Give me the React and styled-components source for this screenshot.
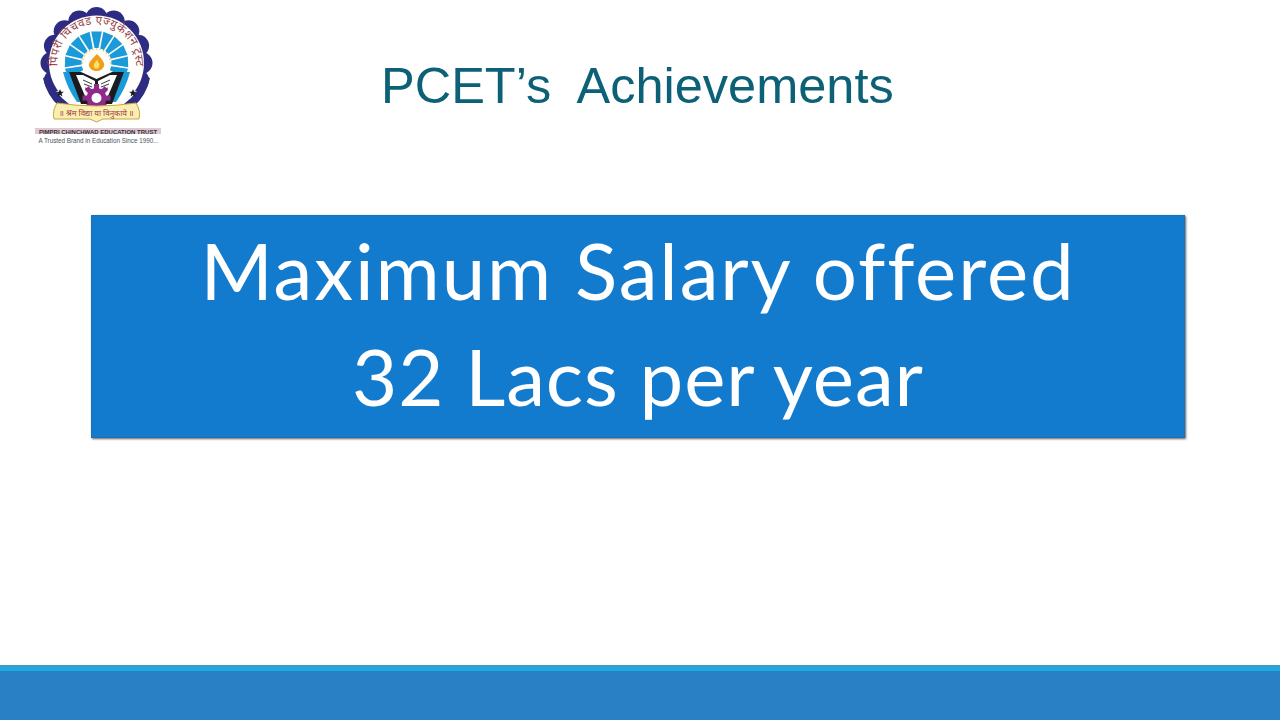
import React from "react";
import styled, { createGlobalStyle } from "styled-components";

const GlobalStyle = createGlobalStyle`
  html, body {
    margin: 0;
    padding: 0;
    background: #fff;
  }
`;

const CX = 63.5;
const CY = 63;
const rad = (a) => (a * Math.PI) / 180;
const polar = (r, a) => `${(CX + r * Math.sin(rad(a))).toFixed(1)} ${(CY - r * Math.cos(rad(a))).toFixed(1)}`;

// angle 0 is straight up
const wedge = (a, half, r1, r2) =>
  `M${polar(r1, a - half * 0.8)} L${polar(r2, a - half)} L${polar(r2, a + half)} L${polar(r1, a + half * 0.8)}Z`;

const scallops = Array.from({ length: 16 }, (_, i) => i * 22.5).filter((a) => a < 135 || a > 225);
const rays = [-110, -88, -66, -44, -22, 0, 22, 44, 66, 88, 110];
const sparks = Array.from({ length: 24 }, (_, i) => i * 15).filter((a) => a < 100 || a > 260);
const gearTeeth = [0, 45, 90, 135, 180, 225, 270, 315];

const Star = ({ x, y }) => (
  <path
    transform={`translate(${x} ${y})`}
    d="M0 -4 L1.1 -1.2 L3.9 -1.2 L1.7 .6 L2.4 3.4 L0 1.8 L-2.4 3.4 L-1.7 .6 L-3.9 -1.2 L-1.1 -1.2Z"
    fill="#1c1c20"
  />
);

const Logo = () => (
  <svg width="128" height="146" viewBox="0 0 128 146">
    {/* scalloped ring, open at the bottom */}
    {scallops.map((a) => (
      <circle
        key={a}
        cx={CX + 45 * Math.sin(rad(a))}
        cy={CY - 45 * Math.cos(rad(a))}
        r="11"
        fill="#2e2c82"
      />
    ))}
    <path d="M10 78 Q14 96 26 106 L36 104 Q20 92 16 76Z" fill="#2e2c82" />
    <path d="M117 78 Q113 96 101 106 L91 104 Q107 92 111 76Z" fill="#2e2c82" />
    <circle cx={CX} cy={CY} r="47.5" fill="#fefefc" />

    <path id="ringText" d="M25.5 72 A39 39 0 1 1 101.5 72" fill="none" />
    <text fontFamily="'Noto Sans', 'DejaVu Sans', sans-serif" fontSize="11.5" fill="#96404a">
      <textPath href="#ringText" startOffset="50%" textAnchor="middle" textLength="128">
        पिंपरी चिंचवड एज्युकेशन ट्रस्ट
      </textPath>
    </text>

    {/* blue sun rays */}
    {rays.map((a) => (
      <path key={a} d={wedge(a, 9.6, 15, 32)} fill="#1a9ad8" />
    ))}
    <path d="M30 72 L38 72 L50 102 L44 102 Q34 88 30 72Z" fill="#1a9ad8" />
    <path d="M97 72 L89 72 L77 102 L83 102 Q93 88 97 72Z" fill="#1a9ad8" />

    {/* lamp */}
    {sparks.map((a) => (
      <circle
        key={a}
        cx={CX + 14 * Math.sin(rad(a))}
        cy={CY - 14 * Math.cos(rad(a))}
        r="0.8"
        fill="#e6c45a"
      />
    ))}
    <path d="M64 54 C69 59 72 63 71 66 C70 69 67 71 63.5 71 C60 71 57 69 56 66 C55 63 59 59 64 54Z" fill="#ef9f1a" />
    <path d="M64 60 C66 63 67 65 66 67 C65 69 62 69 61 67 C60 65 62 62 64 60Z" fill="#fbe06a" />

    {/* open book */}
    <path d="M36 72 L48 72 L63.5 79 L79 72 L91 72 L79 104 L48 104Z" fill="#1b1b1e" />
    <path d="M43 75 L50 75 L62 81 L62 96 L52 96Z" fill="#fff" />
    <path d="M84 75 L77 75 L65 81 L65 96 L75 96Z" fill="#fff" />
    <path
      d="M50 80 L59 84 M51 84 L59 87 M52 88 L59 90 M77 80 L68 84 M76 84 L68 87 M75 88 L68 90"
      stroke="#3c3c44"
      strokeWidth="1"
    />

    {/* gear */}
    {gearTeeth.map((a) => (
      <rect
        key={a}
        x={CX - 2.5}
        y="84"
        width="5"
        height="5"
        fill="#8e2a8c"
        transform={`rotate(${a} ${CX} 98)`}
      />
    ))}
    <circle cx={CX} cy="98" r="7.5" fill="#fff" stroke="#8e2a8c" strokeWidth="5" />

    <Star x={27} y={93} />
    <Star x={100} y={93} />

    {/* motto scroll */}
    <path
      d="M24 103 Q63.5 109 103 103 Q108 111 106 119 L70 119 L63.5 122 L57 119 L21 119 Q19 111 24 103Z"
      fill="#fbeeb2"
      stroke="#c9a83f"
      strokeWidth="1"
    />
    <text
      x={CX}
      y="116"
      textAnchor="middle"
      fontFamily="'Noto Sans', 'DejaVu Sans', sans-serif"
      fontSize="8"
      fill="#9a3f3f"
    >
      ॥ श्रम विद्या या विनुकाये ॥
    </text>

    {/* trust name and tagline */}
    <rect x="2" y="128" width="126" height="6" fill="#dccbd3" />
    <text
      x="65"
      y="133.6"
      textAnchor="middle"
      fontFamily="'Liberation Sans', Arial, sans-serif"
      fontSize="6"
      fontWeight="700"
      fill="#3c2a3a"
    >
      PIMPRI CHINCHWAD EDUCATION TRUST
    </text>
    <text
      x="65.5"
      y="142.5"
      textAnchor="middle"
      fontFamily="'Liberation Sans', Arial, sans-serif"
      fontSize="6.3"
      fill="#4a5560"
    >
      A Trusted Brand in Education Since 1990...
    </text>
  </svg>
);

const App = () => {
  return (
    <>
      <GlobalStyle />
      <Slide>
        <Header>
          <LogoBox>
            <Logo />
          </LogoBox>
          <Title>PCET’s&nbsp; Achievements</Title>
        </Header>
        <Banner>
          <BannerLine $spacing={1.9}>Maximum Salary offered</BannerLine>
          <BannerLine $spacing={0.9}>32 Lacs per year</BannerLine>
        </Banner>
        <Footer />
      </Slide>
    </>
  );
};

const Slide = styled.div`
  width: 1280px;
  height: 720px;
  display: flex;
  flex-direction: column;
  overflow: hidden;
  background: #fff;
`;

const Header = styled.header`
  height: 215px;
  display: grid;
  grid-template-columns: 33px 128px 1fr;
  align-items: start;
  flex-shrink: 0;
`;

const LogoBox = styled.div`
  grid-column: 2;
  height: 146px;
`;

const Title = styled.h1`
  grid-column: 3;
  margin: 54px 0 0 220px;
  font-family: "Liberation Sans", Arial, sans-serif;
  font-weight: 400;
  font-size: 50.5px;
  line-height: 64px;
  color: #0d6176;
  white-space: nowrap;
`;

const Banner = styled.section`
  width: 1094px;
  height: 223px;
  margin-left: 91px;
  flex-shrink: 0;
  box-sizing: border-box;
  padding-top: 2px;
  display: flex;
  flex-direction: column;
  align-items: center;
  background: #137bce;
  box-shadow: inset 0 0 0 1px rgba(50, 90, 120, 0.3), 1px 1px 2px rgba(60, 60, 60, 0.8);
`;

const BannerLine = styled.div`
  height: 106px;
  font-family: "Lato", "Open Sans", sans-serif;
  font-size: 78px;
  line-height: 106px;
  letter-spacing: ${(p) => p.$spacing}px;
  color: #fff;
  white-space: nowrap;
`;

const Footer = styled.footer`
  margin-top: auto;
  height: 53px;
  flex-shrink: 0;
  box-sizing: border-box;
  background: #2a80c5;
  border-top: 4px solid #1ea9e3;
  box-shadow: 0 -2px 0 #3f9dc0;
`;

export default App;
